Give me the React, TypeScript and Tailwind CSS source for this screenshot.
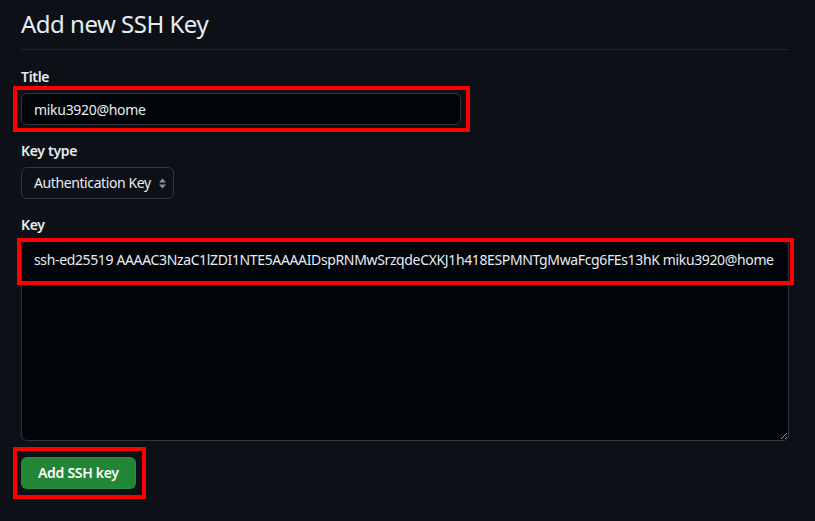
import { useState } from 'react';

const font = { fontFamily: '"Noto Sans", "Open Sans", sans-serif' };

function SelectArrows() {
  return (
    <svg width="7" height="11" viewBox="0 0 7 11" className="text-[#8b949e]">
      <path d="M3.5 0.5 L7 4.5 H0 Z" fill="currentColor" />
      <path d="M3.5 10.5 L7 6.5 H0 Z" fill="currentColor" />
    </svg>
  );
}

export default function App() {
  const [title, setTitle] = useState('miku3920@home');
  const [key, setKey] = useState(
    'ssh-ed25519 AAAAC3NzaC1lZDI1NTE5AAAAIDspRNMwSrzqdeCXKJ1h418ESPMNTgMwaFcg6FEs13hK miku3920@home'
  );

  return (
    <div className="relative min-h-screen bg-[#0d1117] text-[#e6edf3] tracking-[-0.3px]" style={font}>
      <div className="w-[768px] ml-[21px]">
        <h2 className="pt-[6px] pb-[7px] text-[24px] leading-[36px] font-normal tracking-[-0.5px] border-b border-[#21262d]">
          Add new SSH Key
        </h2>

        <div className="mt-4">
          <label className="block text-sm leading-[21px] font-semibold mb-[6px]">Title</label>
          <input
            value={title}
            onChange={(e) => setTitle(e.target.value)}
            className="w-[440px] h-8 px-3 text-sm tracking-[-0.3px] bg-[#010409] border border-[#30363d] rounded-md outline-none text-[#e6edf3]"
          />
        </div>

        <div className="mt-[15px]">
          <label className="block text-sm leading-[21px] font-semibold mb-[6px]">Key type</label>
          <div className="inline-flex items-center gap-[8px] h-8 pl-3 pr-[7px] text-sm tracking-[-0.4px] bg-[#0d1117] border border-[#30363d] rounded-md">
            <span>Authentication Key</span>
            <SelectArrows />
          </div>
        </div>

        <div className="mt-[15px]">
          <label className="block text-sm leading-[21px] font-semibold mb-[6px]">Key</label>
          <textarea
            value={key}
            wrap="off"
            onChange={(e) => setKey(e.target.value)}
            className="block w-full h-[200px] px-3 py-[7px] text-sm leading-[21px] tracking-[-0.36px] overflow-hidden bg-[#010409] border border-[#30363d] rounded-md outline-none text-[#e6edf3] [color-scheme:dark]"
          />
        </div>

        <button className="mt-4 h-8 px-4 text-sm font-semibold text-white bg-[#238636] border border-[#2ea043]/40 rounded-md">
          Add SSH key
        </button>
      </div>

      {/* annotation boxes */}
      <div className="absolute left-[13px] top-[86px] w-[457px] h-[46px] border-4 border-[#ff0000] pointer-events-none" />
      <div className="absolute left-[17px] top-[238px] w-[777px] h-[47px] border-4 border-[#ff0000] pointer-events-none" />
      <div className="absolute left-[13px] top-[447px] w-[133px] h-[52px] border-4 border-[#ff0000] pointer-events-none" />
    </div>
  );
}
